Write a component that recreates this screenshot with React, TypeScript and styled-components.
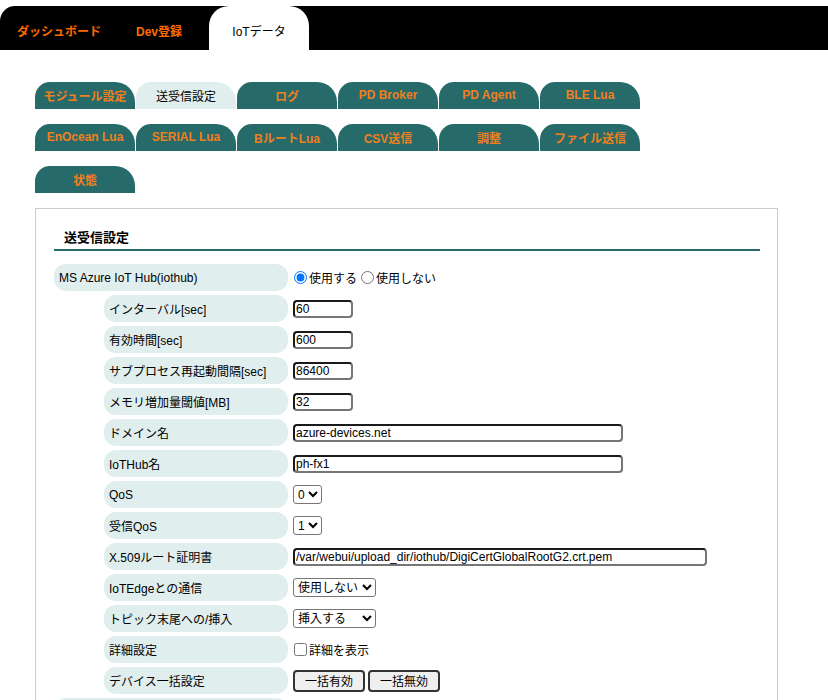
import styled, { createGlobalStyle } from 'styled-components'

const GlobalStyle = createGlobalStyle`
  body {
    margin: 0;
    background: #ffffff;
    font-family: "Liberation Sans", Arial, "Noto Sans CJK JP", sans-serif;
    font-size: 12px;
    color: #000000;
  }
`

const Header = styled.div`
  margin-top: 6px;
  height: 44px;
  background: #000000;
  border-top-left-radius: 15px;
  display: flex;
  padding-left: 9px;
`

const HeaderTab = styled.div<{ $active?: boolean }>`
  width: 100px;
  display: flex;
  align-items: center;
  justify-content: center;
  padding-top: 5px;
  box-sizing: border-box;
  font-size: 12px;
  font-weight: ${p => (p.$active ? 'normal' : 'bold')};
  color: ${p => (p.$active ? '#000000' : '#ff6a00')};
  background: ${p => (p.$active ? '#ffffff' : 'transparent')};
  border-radius: 20px 20px 0 0;
`

const SubTabs = styled.div`
  margin: 32px 0 0 35px;
`

const TabRow = styled.div`
  display: flex;
  gap: 1px;
  margin-bottom: 15px;
`

const SubTab = styled.div<{ $active?: boolean }>`
  width: 100px;
  height: 27px;
  padding-bottom: 1px;
  box-sizing: border-box;
  display: flex;
  align-items: center;
  justify-content: center;
  font-size: 12px;
  font-weight: ${p => (p.$active ? 'normal' : 'bold')};
  color: ${p => (p.$active ? '#000000' : '#f07f1e')};
  background: ${p => (p.$active ? '#e0eeee' : '#266a6a')};
  border-radius: 15px 20px 0 0;
`

const Panel = styled.div`
  margin-left: 35px;
  width: 743px;
  box-sizing: border-box;
  border: 1px solid #cccccc;
  padding: 0 17px 0 18px;
`

const SectionTitle = styled.div`
  padding: 20px 10px 0;
  line-height: 18px;
  height: 20px;
  font-size: 13px;
  font-weight: bold;
  border-bottom: 2px solid #266a6a;
  margin-bottom: 13px;
`

const Row = styled.div<{ $sub?: boolean }>`
  display: flex;
  align-items: center;
  gap: 5px;
  height: 27px;
  margin-bottom: 4px;
  padding-left: ${p => (p.$sub ? '50px' : '0')};
`

const Label = styled.div<{ $sub?: boolean }>`
  width: ${p => (p.$sub ? '184px' : '234px')};
  height: 100%;
  flex-shrink: 0;
  box-sizing: border-box;
  padding-left: 5px;
  display: flex;
  align-items: center;
  background: #e0eeee;
  border-radius: 12px;
  font-size: 12px;
`

const Value = styled.div`
  display: flex;
  align-items: center;
  gap: 3px;
  font-size: 12px;
`

const TextInput = styled.input<{ $w: number }>`
  width: ${p => p.$w}px;
  height: 18px;
  box-sizing: border-box;
  padding: 0 1px;
  font-family: inherit;
  font-size: 12px;
  border: 2px solid;
  border-color: #1a1a1a #767676 #767676 #1a1a1a;
  border-radius: 4px;
  background: #ffffff;
`

const Select = styled.select`
  font-family: inherit;
  font-size: 12px;
  height: 19px;
  padding: 0;
  border: 1px solid #767676;
  border-radius: 3px;
  background: #ffffff;
`

const Choice = styled.label`
  display: flex;
  align-items: center;

  input {
    margin: 0 2px 0 1px;
  }
`

const Button = styled.button`
  height: 22px;
  padding: 0 10px;
  font-family: inherit;
  font-size: 12px;
  background: #efefef;
  border: 2px solid #333333;
  border-radius: 4px;
  color: #000000;
`

const ROW1 = ['モジュール設定', '送受信設定', 'ログ', 'PD Broker', 'PD Agent', 'BLE Lua']
const ROW2 = ['EnOcean Lua', 'SERIAL Lua', 'BルートLua', 'CSV送信', '調整', 'ファイル送信']
const ROW3 = ['状態']

const App = () => {
  return (
    <>
      <GlobalStyle />
      <Header>
        <HeaderTab>ダッシュボード</HeaderTab>
        <HeaderTab>Dev登録</HeaderTab>
        <HeaderTab $active>IoTデータ</HeaderTab>
      </Header>

      <SubTabs>
        {[ROW1, ROW2, ROW3].map((row, i) => (
          <TabRow key={i}>
            {row.map(t => (
              <SubTab key={t} $active={t === '送受信設定'}>{t}</SubTab>
            ))}
          </TabRow>
        ))}
      </SubTabs>

      <Panel>
        <SectionTitle>送受信設定</SectionTitle>

        <Row>
          <Label>MS Azure IoT Hub(iothub)</Label>
          <Value>
            <Choice><input type="radio" name="iothub" defaultChecked />使用する</Choice>
            <Choice><input type="radio" name="iothub" />使用しない</Choice>
          </Value>
        </Row>
        <Row $sub>
          <Label $sub>インターバル[sec]</Label>
          <Value><TextInput $w={60} defaultValue="60" /></Value>
        </Row>
        <Row $sub>
          <Label $sub>有効時間[sec]</Label>
          <Value><TextInput $w={60} defaultValue="600" /></Value>
        </Row>
        <Row $sub>
          <Label $sub>サブプロセス再起動間隔[sec]</Label>
          <Value><TextInput $w={60} defaultValue="86400" /></Value>
        </Row>
        <Row $sub>
          <Label $sub>メモリ増加量閾値[MB]</Label>
          <Value><TextInput $w={60} defaultValue="32" /></Value>
        </Row>
        <Row $sub>
          <Label $sub>ドメイン名</Label>
          <Value><TextInput $w={330} defaultValue="azure-devices.net" /></Value>
        </Row>
        <Row $sub>
          <Label $sub>IoTHub名</Label>
          <Value><TextInput $w={330} defaultValue="ph-fx1" /></Value>
        </Row>
        <Row $sub>
          <Label $sub>QoS</Label>
          <Value>
            <Select defaultValue="0">
              <option value="0">0</option>
              <option value="1">1</option>
            </Select>
          </Value>
        </Row>
        <Row $sub>
          <Label $sub>受信QoS</Label>
          <Value>
            <Select defaultValue="1">
              <option value="0">0</option>
              <option value="1">1</option>
            </Select>
          </Value>
        </Row>
        <Row $sub>
          <Label $sub>X.509ルート証明書</Label>
          <Value>
            <TextInput $w={414} defaultValue="/var/webui/upload_dir/iothub/DigiCertGlobalRootG2.crt.pem" />
          </Value>
        </Row>
        <Row $sub>
          <Label $sub>IoTEdgeとの通信</Label>
          <Value>
            <Select defaultValue="off">
              <option value="off">使用しない</option>
              <option value="on">使用する</option>
            </Select>
          </Value>
        </Row>
        <Row $sub>
          <Label $sub>トピック末尾への/挿入</Label>
          <Value>
            <Select defaultValue="on">
              <option value="on">挿入する</option>
              <option value="off">挿入しない</option>
            </Select>
          </Value>
        </Row>
        <Row $sub>
          <Label $sub>詳細設定</Label>
          <Value>
            <Choice><input type="checkbox" />詳細を表示</Choice>
          </Value>
        </Row>
        <Row $sub>
          <Label $sub>デバイス一括設定</Label>
          <Value>
            <Button>一括有効</Button>
            <Button>一括無効</Button>
          </Value>
        </Row>
        <Row>
          <Label>AWS IoT Core(awsiot)</Label>
          <Value>
            <Choice><input type="radio" name="aws" />使用する</Choice>
            <Choice><input type="radio" name="aws" defaultChecked />使用しない</Choice>
          </Value>
        </Row>
      </Panel>
    </>
  )
}

export default App
